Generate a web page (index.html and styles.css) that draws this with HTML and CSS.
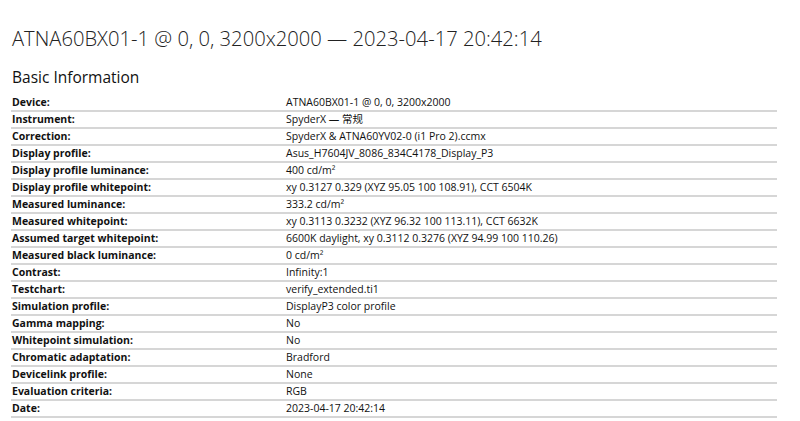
FILE: index.html
```html
<!DOCTYPE html>
<html>
<head>
<meta charset="utf-8">
<link rel="stylesheet" href="styles.css">
</head>
<body>
<h1 class="title">ATNA60BX01-1 @ 0, 0, 3200x2000 — 2023-04-17 20:42:14</h1>
<h2 class="section">Basic Information</h2>
<table class="info">
<tr><th>Device:</th><td>ATNA60BX01-1 @ 0, 0, 3200x2000</td></tr>
<tr><th>Instrument:</th><td>SpyderX — 常规</td></tr>
<tr><th>Correction:</th><td>SpyderX &amp; ATNA60YV02-0 (i1 Pro 2).ccmx</td></tr>
<tr><th>Display profile:</th><td>Asus_H7604JV_8086_834C4178_Display_P3</td></tr>
<tr><th>Display profile luminance:</th><td>400 cd/m²</td></tr>
<tr><th>Display profile whitepoint:</th><td>xy 0.3127 0.329 (XYZ 95.05 100 108.91), CCT 6504K</td></tr>
<tr><th>Measured luminance:</th><td>333.2 cd/m²</td></tr>
<tr><th>Measured whitepoint:</th><td>xy 0.3113 0.3232 (XYZ 96.32 100 113.11), CCT 6632K</td></tr>
<tr><th>Assumed target whitepoint:</th><td>6600K daylight, xy 0.3112 0.3276 (XYZ 94.99 100 110.26)</td></tr>
<tr><th>Measured black luminance:</th><td>0 cd/m²</td></tr>
<tr><th>Contrast:</th><td>Infinity:1</td></tr>
<tr><th>Testchart:</th><td>verify_extended.ti1</td></tr>
<tr><th>Simulation profile:</th><td>DisplayP3 color profile</td></tr>
<tr><th>Gamma mapping:</th><td>No</td></tr>
<tr><th>Whitepoint simulation:</th><td>No</td></tr>
<tr><th>Chromatic adaptation:</th><td>Bradford</td></tr>
<tr><th>Devicelink profile:</th><td>None</td></tr>
<tr><th>Evaluation criteria:</th><td>RGB</td></tr>
<tr><th>Date:</th><td>2023-04-17 20:42:14</td></tr>
</table>
</body>
</html>
```
FILE: styles.css
```css
html, body { margin: 0; padding: 0; background: #fff; }
body {
  font-family: "Open Sans", "Noto Sans CJK SC", sans-serif;
  color: #222;
  padding: 24px 23px 0 11px;
}
.title {
  font-weight: 300;
  font-size: 20.2px;
  line-height: 28px;
  margin: 0 0 0 1px;
  color: #222;
}
.section {
  font-weight: 400;
  font-size: 15.5px;
  line-height: 20px;
  margin: 15px 0 8px 1px;
  color: #111;
}
.info {
  width: 766px;
  border-collapse: collapse;
  font-size: 10.5px;
}
.info th, .info td {
  padding: 0 1px;
  height: 15px;
  line-height: 15px;
  text-align: left;
  vertical-align: middle;
  border-bottom: 2px solid #d6d6d6;
  white-space: nowrap;
}
.info th {
  font-weight: 700;
  width: 272px;
  color: #111;
}
.info td { color: #111; }
```
